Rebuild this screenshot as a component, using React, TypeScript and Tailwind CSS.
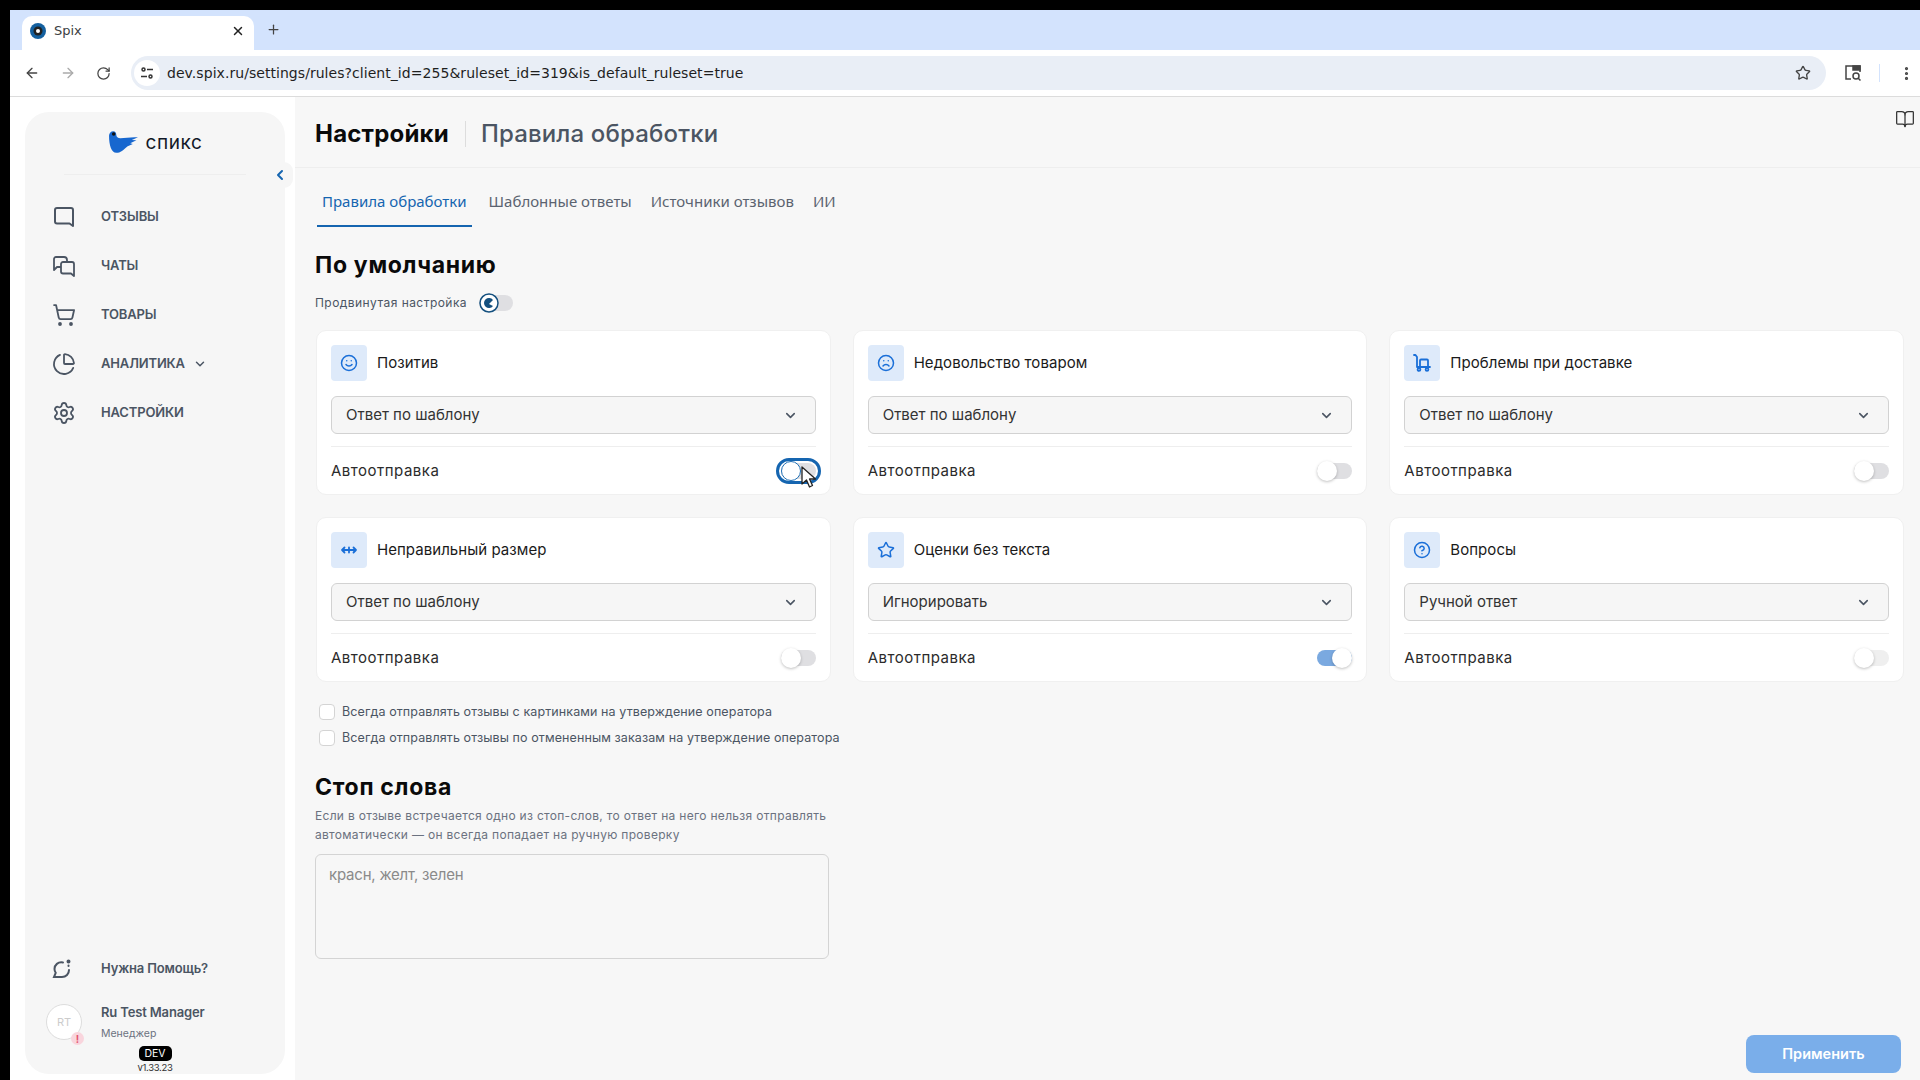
import { ArrowLeft, ArrowRight, RotateCw, Star, MoreVertical, X, Plus, ChevronDown, ChevronLeft, BookOpen, ShoppingCart, ChartPie, Settings, Smile, Frown, CircleHelp } from 'lucide-react';
import type { ReactNode } from 'react';

function BubbleIcon() {
    return (
        <svg width="24" height="24" viewBox="0 0 24 24" fill="none" stroke="#4b5563" strokeWidth="2" strokeLinejoin="round">
            <path d="M5 3h14a2 2 0 0 1 2 2v16l-3.5-2.5H5a2 2 0 0 1-2-2V5a2 2 0 0 1 2-2z" />
        </svg>
    );
}

function ChatsIcon() {
    return (
        <svg width="24" height="24" viewBox="0 0 24 24" fill="none" stroke="#4b5563" strokeWidth="1.8" strokeLinejoin="round">
            <path d="M9 13H5l-3 3V5a2 2 0 0 1 2-2h8a3 3 0 0 1 3 3v2" />
            <path d="M11 8h9a2 2 0 0 1 2 2v12l-3-2.500H11a2 2 0 0 1-2-2V10a2 2 0 0 1 2-2z" />
        </svg>
    );
}

function HelpIcon() {
    return (
        <svg width="20" height="20" viewBox="0 0 20 20" fill="none" stroke="#4b5563" strokeWidth="2" strokeLinecap="round">
            <path d="M11 3.500C6 2.500 2.500 6 2.500 10c0 1.500.5 2.800 1.200 3.800L2 18h8c4 0 7-3 7-7" />
            <circle cx="16.500" cy="2.500" r="1" fill="#4b5563" />
            <path d="M16.500 6.500v.5" />
        </svg>
    );
}

function DollyIcon() {
    return (
        <svg width="18" height="18" viewBox="0 0 18 18" fill="none" stroke="#1a6fd8" strokeWidth="1.800" strokeLinecap="round" strokeLinejoin="round">
            <path d="M1 1h1.500L4 3v10h13" />
            <rect x="7" y="5.500" width="8" height="7.500" rx="1" />
            <circle cx="6" cy="15.500" r="1.400" />
            <circle cx="14" cy="15.500" r="1.400" />
        </svg>
    );
}

function SizeIcon() {
    return (
        <svg width="18" height="18" viewBox="0 0 18 18" fill="none" stroke="#1a6fd8" strokeWidth="1.800" strokeLinecap="round" strokeLinejoin="round">
            <path d="M2 9h14M4.500 6.500 2 9l2.500 2.500M13.500 6.500 16 9l-2.500 2.500M9 6.500v5" />
        </svg>
    );
}

function Logo() {
    return (
        <div className="flex items-center gap-[8px] pb-[2px]">
            <svg width="30" height="22" viewBox="0 0 29 21">
                <path d="M1 4.500C1 1.800 3 0 5 0c2 0 3 1.500 3 3.500 0 2 1.500 3.300 4 3.300 5 0 10-1.300 17-.8l-6 2.600 4.500.3-6 2.800 2.500.8-5 2C15 18 12 21 8 21 3.500 21 1 14 1 4.500z" fill="#1767cf" />
                <circle cx="5.500" cy="2.800" r="1.700" fill="#111" />
            </svg>
            <span className="text-[19px] leading-none font-normal tracking-[0.6px] text-[#111827]">спикс</span>
        </div>
    );
}

function Toggle({ on = false, faded = false, focused = false }: { on?: boolean; faded?: boolean; focused?: boolean }) {
    return (
        <div className={`relative h-[16px] w-[35px] rounded-full ${on ? 'bg-[#7aa9e0]' : faded ? 'bg-[#efefef]' : 'bg-[#dfdfe2]'} ${focused ? 'outline-[3px] outline-offset-[2px] outline-[#1565b0]' : ''}`}>
            <div className={`absolute top-[-2px] h-[20px] w-[20px] rounded-full bg-white ${on ? 'right-0' : 'left-0'} ${focused ? 'border border-[#1f6fb5]' : 'shadow-[0_1px_3px_rgba(0,0,0,0.25)]'}`} />
        </div>
    );
}

interface RuleCardProps {
    title: string;
    icon: ReactNode;
    value: string;
    toggle: ReactNode;
}

function RuleCard({ title, icon, value, toggle }: RuleCardProps) {
    return (
        <div className="flex h-[165px] flex-col rounded-[10px] border border-[#f0f0f0] bg-white px-[14px] pt-[14px]">
            <div className="flex items-center gap-[10px]">
                <div className="flex h-[36px] w-[36px] items-center justify-center rounded-[4px] bg-[#deeafa]">{icon}</div>
                <span className="pb-[1px] text-[15px] leading-[20px] font-normal tracking-[0.05px] text-[#1a1a1a]">{title}</span>
            </div>
            <div className="mt-[15px] flex h-[38px] items-center justify-between rounded-[6px] border-[1.5px] border-[#d2d2d2] bg-[#f6f6f6] pr-[17px] pl-[14px]">
                <span className="text-[15px] text-[#333333]">{value}</span>
                <ChevronDown size={15} strokeWidth={2.5} className="text-[#4b5563]" />
            </div>
            <div className="mt-[12px] flex flex-1 items-start justify-between border-t border-[#eeeeee] pt-[15px]">
                <span className="text-[15px] leading-[18px] tracking-[0.5px] text-[#2b2b2b]">Автоотправка</span>
                <div className="pt-[1px]">{toggle}</div>
            </div>
        </div>
    );
}

const iconClass = 'text-[#1a6fd8]';

const rules = [
    { title: 'Позитив', value: 'Ответ по шаблону', icon: <Smile size={18} strokeWidth={2} className={iconClass} />, toggle: <div className="relative"><Toggle focused /><svg width="20" height="24" viewBox="0 0 20 24" className="absolute top-[3px] left-[19px]"><path d="M2 1v17l4.500-4 3 7 3-1.500-3-6.500h6z" fill="#fff" stroke="#222" strokeWidth="1.300" strokeLinejoin="round" /></svg></div> },
    { title: 'Недовольство товаром', value: 'Ответ по шаблону', icon: <Frown size={18} strokeWidth={2} className={iconClass} />, toggle: <Toggle /> },
    { title: 'Проблемы при доставке', value: 'Ответ по шаблону', icon: <DollyIcon />, toggle: <Toggle /> },
    { title: 'Неправильный размер', value: 'Ответ по шаблону', icon: <SizeIcon />, toggle: <Toggle /> },
    { title: 'Оценки без текста', value: 'Игнорировать', icon: <Star size={18} strokeWidth={2} className={iconClass} />, toggle: <Toggle on /> },
    { title: 'Вопросы', value: 'Ручной ответ', icon: <CircleHelp size={18} strokeWidth={2} className={iconClass} />, toggle: <Toggle faded /> },
];

const navItems = [
    { label: 'Отзывы', icon: <BubbleIcon /> },
    { label: 'Чаты', icon: <ChatsIcon /> },
    { label: 'Товары', icon: <ShoppingCart size={24} strokeWidth={1.8} className="text-[#4b5563]" /> },
    { label: 'Аналитика', icon: <ChartPie size={24} strokeWidth={1.8} className="text-[#4b5563]" />, arrow: true },
    { label: 'Настройки', icon: <Settings size={24} strokeWidth={1.8} className="text-[#4b5563]" /> },
];

function BrowserChrome() {
    return (
        <div className="font-['DejaVu_Sans',sans-serif]">
            <div className="flex h-[40px] items-end bg-[#d3e3fd] pl-[12px]">
                <div className="flex h-[34px] w-[232px] items-center rounded-t-[10px] bg-white pr-[9px] pb-[5px] pl-[8px]">
                    <svg width="16" height="16" viewBox="0 0 16 16" className="shrink-0">
                        <circle cx="8" cy="8" r="8" fill="#14609f" />
                        <circle cx="8" cy="8" r="4.500" fill="#222" />
                        <circle cx="8" cy="8" r="2" fill="#fff" />
                    </svg>
                    <span className="ml-[8px] flex-1 text-[13px] text-[#3c4043]">Spix</span>
                    <X size={14} strokeWidth={2.5} className="text-[#222]" />
                </div>
                <Plus size={15} strokeWidth={2} className="mb-[13px] ml-[12px] text-[#444]" />
            </div>
            <div className="flex h-[47px] items-center border-b border-[#dcdcdc] bg-white pr-[5px] pl-[14px]">
                <ArrowLeft size={16} strokeWidth={2} className="text-[#444]" />
                <ArrowRight size={16} strokeWidth={2} className="ml-[20px] text-[#aaa]" />
                <RotateCw size={15} strokeWidth={2} className="ml-[20px] text-[#444]" />
                <div className="ml-[20px] flex h-[34px] w-[1695px] items-center rounded-full bg-[#e9eef6] pr-[15px] pl-[3px]">
                    <div className="flex h-[26px] w-[26px] items-center justify-center rounded-full bg-white">
                        <svg width="14" height="14" viewBox="0 0 14 14" fill="none" stroke="#333" strokeWidth="1.500">
                            <circle cx="3.500" cy="3.500" r="1.500" />
                            <path d="M7 3.500h6M1 10.500h6" />
                            <circle cx="10.500" cy="10.500" r="1.500" />
                        </svg>
                    </div>
                    <span className="ml-[7px] flex-1 text-[14px] tracking-[0.05px] text-[#1f1f1f]">dev.spix.ru/settings/rules?client_id=255&amp;ruleset_id=319&amp;is_default_ruleset=true</span>
                    <Star size={16} strokeWidth={2} className="text-[#444]" />
                </div>
                <svg width="18" height="18" viewBox="0 0 18 18" fill="none" stroke="#444" strokeWidth="1.500" className="ml-[18px]">
                    <path d="M7 15H2V2h14v6" />
                    <path d="M9 2h7v4H9z" fill="#444" />
                    <circle cx="12" cy="12" r="3" />
                    <path d="M14 14l2.500 2.500" />
                </svg>
                <div className="ml-[17px] h-[18px] w-px bg-[#d3e3fd]" />
                <MoreVertical size={17} strokeWidth={2.5} className="ml-[18px] text-[#444]" />
            </div>
        </div>
    );
}

function Sidebar() {
    return (
        <div className="flex w-[285px] shrink-0 bg-white pt-[15px] pr-[10px] pb-[6px] pl-[15px]">
            <aside className="relative flex flex-1 flex-col rounded-[24px] bg-[#f6f6f6]">
                <div className="flex h-[62px] items-center justify-center">
                    <Logo />
                </div>
                <div className="mx-[39px] h-px bg-[#eeeeee]" />
                <div className="absolute top-[50px] right-[-8px] flex h-[26px] w-[18px] items-center justify-center rounded-full bg-[#f6f6f6] pr-[8px]">
                    <ChevronLeft size={16} strokeWidth={3} className="shrink-0 text-[#1565b0]" />
                </div>
                <nav className="mt-[30px] flex flex-col gap-[25px] pl-[27px]">
                    {navItems.map(item => (
                        <div key={item.label} className="flex h-[24px] items-center">
                            <div className="w-[49px] shrink-0">{item.icon}</div>
                            <span className="text-[13px] font-semibold tracking-[-0.15px] text-[#4b5563] uppercase">{item.label}</span>
                            {item.arrow && <ChevronDown size={14} strokeWidth={2.5} className="ml-[8px] text-[#4b5563]" />}
                        </div>
                    ))}
                </nav>
                <div className="mt-auto flex items-center pl-[27px]">
                    <div className="w-[49px]"><HelpIcon /></div>
                    <span className="text-[13px] font-semibold tracking-[-0.15px] text-[#4b5563]">Нужна Помощь?</span>
                </div>
                <div className="mt-[25px] flex pl-[21px]">
                    <div className="relative flex h-[36px] w-[36px] items-center justify-center rounded-full border border-[#dddddd] bg-white text-[11px] text-[#cccccc]">
                        RT
                        <div className="absolute right-[-3px] bottom-[-6px] flex h-[13px] w-[13px] items-center justify-center rounded-full bg-[#f9d5dd] text-[10px] leading-none font-bold text-[#e2546f]">!</div>
                    </div>
                    <div className="ml-[19px] flex flex-col">
                        <span className="text-[13px] leading-[16px] font-semibold tracking-[-0.15px] text-[#4b5563]">Ru Test Manager</span>
                        <span className="mt-[7px] text-[10.5px] leading-[13px] text-[#6b7280]">Менеджер</span>
                    </div>
                </div>
                <div className="mt-[6px] flex flex-col items-center">
                    <div className="flex h-[15px] w-[33px] items-center justify-center rounded-[5px] bg-black text-[10.5px] text-white">DEV</div>
                    <span className="mt-[1px] text-[9.5px] leading-[12px] tracking-[-0.3px] text-[#333]">v1.33.23</span>
                </div>
            </aside>
        </div>
    );
}

function Checkbox({ label }: { label: string }) {
    return (
        <label className="flex h-[16px] items-center gap-[7px] pl-[3px]">
            <span className="h-[16px] w-[16px] rounded-[4px] border border-[#d4d4d4] bg-white" />
            <span className="text-[12.500px] tracking-[0.1px] text-[#4b5563]">{label}</span>
        </label>
    );
}

export default function App() {
    return (
        <div className="flex h-screen w-full overflow-hidden bg-black pt-[10px] pl-[10px] font-['Inter',sans-serif]">
            <div className="flex min-w-0 flex-1 flex-col">
                <BrowserChrome />
                <div className="flex min-h-0 flex-1">
                    <Sidebar />
                    <main className="flex min-w-0 flex-1 flex-col bg-[#f7f7f7]">
                        <header className="flex h-[71px] items-center justify-between border-b border-[#eeeeee] pr-[3px] pl-[20px]">
                            <div className="flex items-center pt-[4px]">
                                <h1 className="text-[24px] font-bold tracking-[0.2px] text-[#0a0a0a]">Настройки</h1>
                                <div className="mr-[15px] ml-[16px] h-[26px] w-px bg-[#dddddd]" />
                                <h2 className="text-[24px] font-medium tracking-[0.15px] text-[#4b5563]">Правила обработки</h2>
                            </div>
                            <BookOpen size={20} strokeWidth={1.5} className="mr-[2px] mb-[26px] text-[#333]" />
                        </header>

                        <div className="flex h-[59px] items-end pl-[22px] font-['Noto_Sans',sans-serif] text-[15px] text-[#5b6370]">
                            <div className="flex h-[37px] border-b-[2px] border-[#1565b0] px-[5px] text-[#1565b0]">Правила обработки</div>
                            <div className="ml-[17px] flex h-[37px]">Шаблонные ответы</div>
                            <div className="ml-[19px] flex h-[37px]">Источники отзывов</div>
                            <div className="ml-[19px] flex h-[37px]">ИИ</div>
                        </div>

                        <div className="flex flex-1 flex-col pr-[16px] pl-[21px]">
                            <h3 className="mt-[24px] -ml-[1px] text-[23px] leading-[28px] font-bold tracking-[0.7px] text-[#0a0a0a]">По умолчанию</h3>
                            <div className="mt-[15px] flex h-[18px] items-center -ml-[1px]">
                                <span className="text-[12px] tracking-[0.45px] text-[#4b5563]">Продвинутая настройка</span>
                                <div className="relative ml-[12px] h-[16px] w-[34px] rounded-full bg-[#dfdfe2]">
                                    <svg width="20" height="20" viewBox="0 0 20 20" className="absolute top-[-2px] left-0">
                                        <circle cx="10" cy="10" r="9" fill="#fff" stroke="#14507f" strokeWidth="1.500" />
                                        <path d="M14 7a5 5 0 1 0 0 6l-4-2z" fill="#14507f" />
                                    </svg>
                                </div>
                            </div>

                            <div className="mt-[18px] grid grid-cols-3 gap-[22px]">
                                {rules.map(rule => (
                                    <RuleCard key={rule.title} {...rule} />
                                ))}
                            </div>

                            <div className="mt-[22px] flex flex-col gap-[10px]">
                                <Checkbox label="Всегда отправлять отзывы с картинками на утверждение оператора" />
                                <Checkbox label="Всегда отправлять отзывы по отмененным заказам на утверждение оператора" />
                            </div>

                            <h3 className="mt-[27px] -ml-[1px] text-[23px] leading-[28px] font-bold tracking-[0.7px] text-[#0a0a0a]">Стоп слова</h3>
                            <p className="mt-[5px] -ml-[1px] w-[530px] text-[12px] leading-[19px] tracking-[0.3px] text-[#6b7280]">
                                Если в отзыве встречается одно из стоп-слов, то ответ на него нельзя отправлять автоматически — он всегда попадает на ручную проверку
                            </p>
                            <div className="mt-[10px] -ml-[1px] h-[105px] w-[514px] rounded-[6px] border-[1.5px] border-[#d4d4d4] px-[13px] py-[10px] text-[15px] leading-[20px] tracking-[-0.2px] text-[#8a8a8a]">
                                красн, желт, зелен
                            </div>

                            <div className="mt-auto flex justify-end pr-[3px] pb-[7px]">
                                <button className="h-[38px] w-[155px] rounded-[8px] bg-[#7aaeea] text-[14.500px] font-semibold text-white">Применить</button>
                            </div>
                        </div>
                    </main>
                </div>
            </div>
        </div>
    );
}
